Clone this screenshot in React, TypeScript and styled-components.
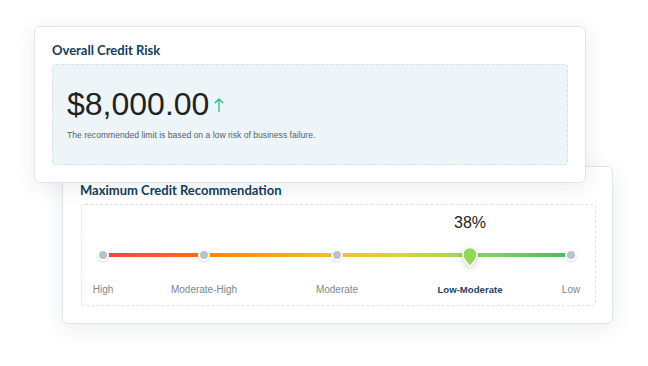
import styled, { createGlobalStyle } from "styled-components";

const GlobalStyle = createGlobalStyle`
  html, body {
    margin: 0;
    padding: 0;
    background: #ffffff;
  }
`;

const navy = "#123d5c";

interface Level {
  name: string;
  at: number;
}

// positions on the scale, as a fraction of the track
const levels: Level[] = [
  { name: "High", at: 0 },
  { name: "Moderate-High", at: 101 / 468 },
  { name: "Moderate", at: 234 / 468 },
  { name: "Low-Moderate", at: 367 / 468 },
  { name: "Low", at: 1 },
];
const activeLevel = 3;

const Page = styled.div`
  display: flex;
  flex-direction: column;
  align-items: flex-start;
  width: 648px;
  height: 366px;
  padding: 26px 0 0 34px;
  box-sizing: border-box;
  overflow: hidden;
`;

const Card = styled.section<{ $width: number; $offset: number; $front?: boolean }>`
  position: relative;
  z-index: ${(p) => (p.$front ? 2 : 1)};
  display: flex;
  flex-direction: column;
  gap: 5px;
  width: ${(p) => p.$width}px;
  margin-left: ${(p) => p.$offset}px;
  margin-top: ${(p) => (p.$front ? 0 : -17)}px;
  box-sizing: border-box;
  padding: 14px 16px 17px 17px;
  background: #ffffff;
  border: 1px solid #e1e5ea;
  border-radius: 6px;
  box-shadow: 0 4px 22px rgba(30, 45, 70, 0.09);
`;

const Title = styled.h2`
  margin: 0;
  font-family: Lato, "Liberation Sans", sans-serif;
  font-weight: 700;
  font-size: 13px;
  line-height: 18px;
  color: ${navy};
`;

const RiskBox = styled.div`
  display: flex;
  flex-direction: column;
  gap: 7px;
  box-sizing: border-box;
  height: 101px;
  margin-right: 1px;
  padding: 21px 14px 0;
  background: #eef5f8;
  border: 1px dashed #d6e1e6;
  border-radius: 4px;
`;

const AmountRow = styled.div`
  display: flex;
  align-items: center;
  gap: 5px;
  height: 36px;
`;

const Amount = styled.span`
  font-family: "Liberation Sans", Arial, sans-serif;
  font-size: 32px;
  line-height: 36px;
  color: #222222;
`;

const UpArrow = styled.svg`
  margin-top: 1px;
  flex: none;
`;

const Note = styled.p`
  margin: 0;
  font-family: "Liberation Sans", Arial, sans-serif;
  font-size: 8.6px;
  line-height: 12px;
  color: #56606b;
`;

const ScaleBox = styled.div`
  box-sizing: border-box;
  height: 102px;
  margin-left: 1px;
  padding: 8px 0 0 21px;
  background: #ffffff;
  border: 1px dashed #dde2e7;
  border-radius: 4px;
`;

const ScaleArea = styled.div`
  display: flex;
  flex-direction: column;
  width: 468px;
`;

const Row = styled.div<{ $height: number; $gap: number }>`
  position: relative;
  height: ${(p) => p.$height}px;
  margin-top: ${(p) => p.$gap}px;
`;

const Percent = styled.span`
  position: absolute;
  top: 0;
  transform: translateX(-50%);
  font-family: "Liberation Sans", Arial, sans-serif;
  font-size: 16px;
  line-height: 20px;
  color: #222222;
`;

const Track = styled.div`
  position: absolute;
  left: 0;
  right: 0;
  top: 8px;
  height: 4px;
  border-radius: 2px;
  background: linear-gradient(
    90deg,
    #f2433b 0%,
    #ff6a1d 20%,
    #ff860c 23%,
    #fca421 38%,
    #f6bd2e 50%,
    #d6d446 64%,
    #a9d84e 75%,
    #83d35a 82%,
    #3fbe63 100%
  );
`;

const Dot = styled.span`
  position: absolute;
  top: 4px;
  width: 8px;
  height: 8px;
  margin-left: -6px;
  border-radius: 50%;
  background: #bcc2c8;
  border: 2px solid #ffffff;
  box-shadow: 0 1px 2px rgba(0, 0, 0, 0.15);
`;

const Pin = styled.svg`
  position: absolute;
  top: 1px;
  margin-left: -9px;
  filter: drop-shadow(0 2px 3px rgba(0, 0, 0, 0.18));
`;

const LevelLabel = styled.span<{ $active: boolean }>`
  position: absolute;
  top: 0;
  transform: translateX(-50%);
  white-space: nowrap;
  font-family: "Liberation Sans", Arial, sans-serif;
  font-size: ${(p) => (p.$active ? 9.6 : 10)}px;
  line-height: 12px;
  font-weight: ${(p) => (p.$active ? 700 : 400)};
  color: ${(p) => (p.$active ? "#23435f" : "#7c868f")};
`;

const pct = (at: number) => `${at * 100}%`;

export default function App() {
  return (
    <Page>
      <GlobalStyle />
      <Card $width={552} $offset={0} $front>
        <Title>Overall Credit Risk</Title>
        <RiskBox>
          <AmountRow>
            <Amount>$8,000.00</Amount>
            <UpArrow width="10" height="14" viewBox="0 0 10 14" fill="none">
              <path
                d="M5 13.5V1M1.2 4.8L5 1l3.8 3.8"
                stroke="#27bd84"
                strokeWidth="1.3"
                strokeLinecap="round"
                strokeLinejoin="round"
              />
            </UpArrow>
          </AmountRow>
          <Note>The recommended limit is based on a low risk of business failure.</Note>
        </RiskBox>
      </Card>

      <Card $width={551} $offset={28}>
        <Title>Maximum Credit Recommendation</Title>
        <ScaleBox>
          <ScaleArea>
            <Row $height={20} $gap={0}>
              <Percent style={{ left: pct(levels[activeLevel].at) }}>38%</Percent>
            </Row>
            <Row $height={20} $gap={12}>
              <Track />
              {levels.map((l, i) =>
                i === activeLevel ? (
                  <Pin
                    key={l.name}
                    style={{ left: pct(l.at) }}
                    width="18"
                    height="22"
                    viewBox="0 0 18 22"
                  >
                    <path
                      d="M9 20.5C6.2 17 1.8 13.4 1.8 8.7a7.2 7.2 0 0 1 14.4 0c0 4.7-4.4 8.3-7.2 11.8z"
                      fill="#93d65b"
                      stroke="#ffffff"
                      strokeWidth="1.4"
                    />
                  </Pin>
                ) : (
                  <Dot key={l.name} style={{ left: pct(l.at) }} />
                )
              )}
            </Row>
            <Row $height={12} $gap={19}>
              {levels.map((l, i) => (
                <LevelLabel key={l.name} $active={i === activeLevel} style={{ left: pct(l.at) }}>
                  {l.name}
                </LevelLabel>
              ))}
            </Row>
          </ScaleArea>
        </ScaleBox>
      </Card>
    </Page>
  );
}
